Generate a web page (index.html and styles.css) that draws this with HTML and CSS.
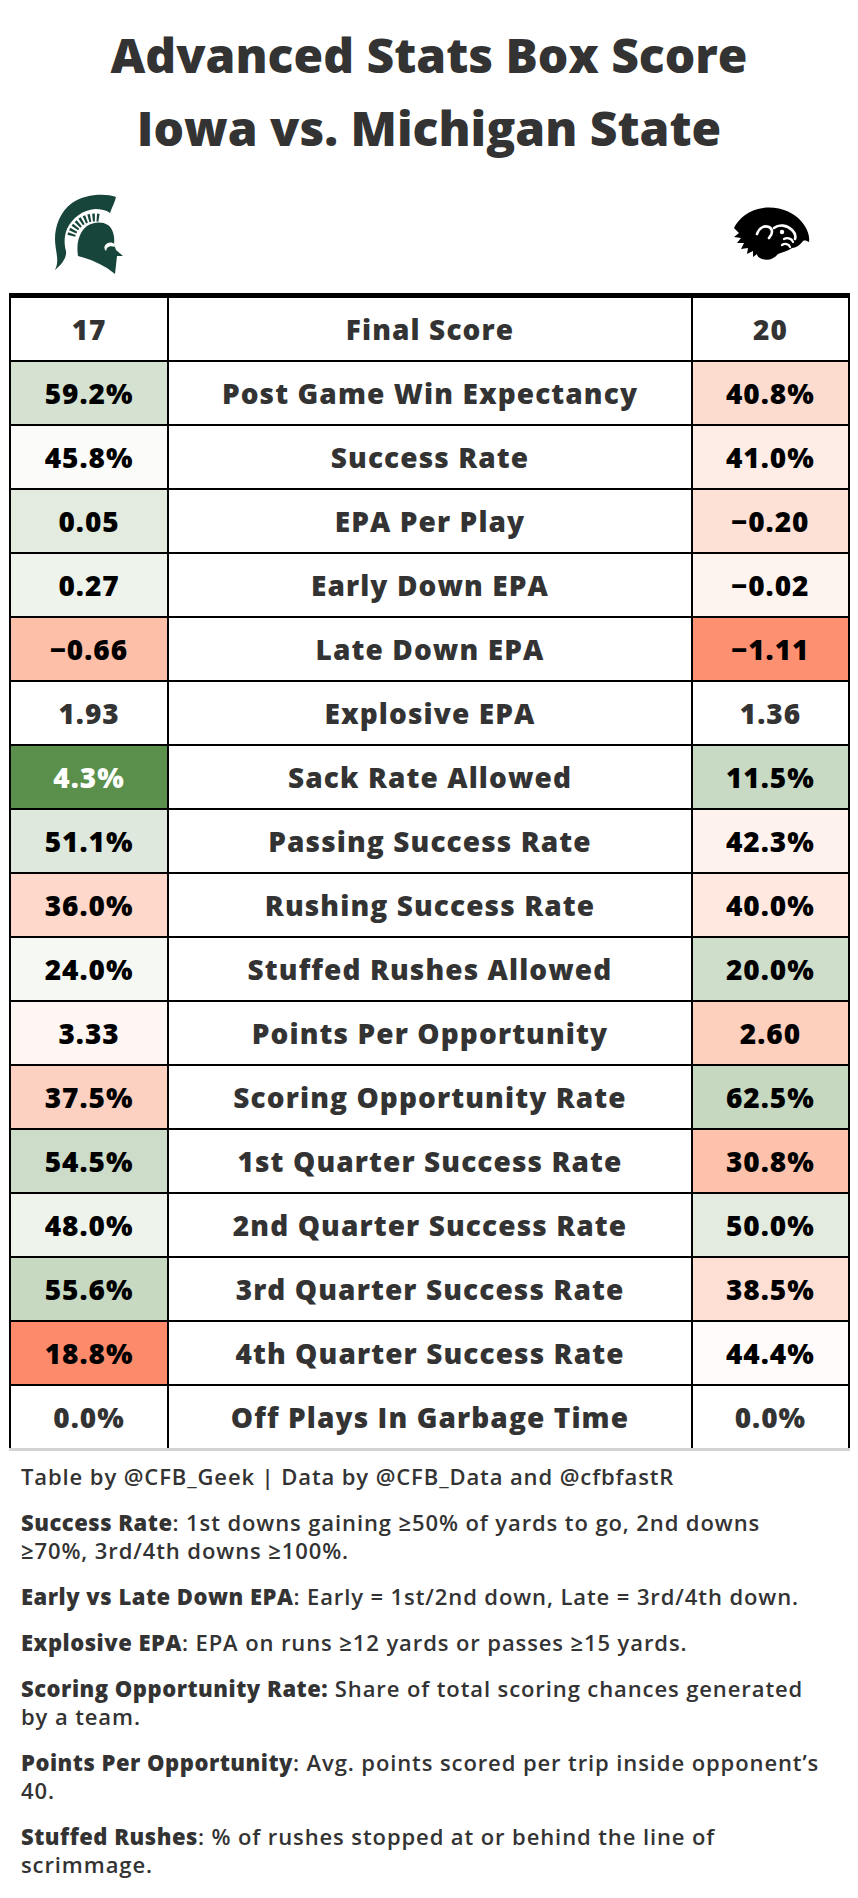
FILE: index.html
```html
<!DOCTYPE html>
<html lang="en">
<head>
<meta charset="utf-8">
<title>Advanced Stats Box Score</title>
<link rel="stylesheet" href="styles.css">
</head>
<body>
<div class="page">
  <header class="title">
    <h1>Advanced Stats Box Score<br>Iowa vs. Michigan State</h1>
  </header>
  <div class="logos">
    <div class="logo-cell">
      <svg class="logo-msu" width="68" height="80" viewBox="0 0 68 80" aria-label="Michigan State">
        <path fill="#18453b" d="M61,3 C50,-1 30,0 17,9 C5,18 0,32 0,45 C0,57 5,66 0,76 C6,71 12,64 11,57 C9,50 9,42 12,35 C17,24 28,16 40,15 C46,15 51,16 55,19 C57,13 60,8 61,3 Z"/>
        <path fill="none" stroke="#18453b" stroke-width="8" stroke-dasharray="2.3 1.9" d="M16.3,41.7 A24.5,24.5 0 0 1 44.3,23.9"/>
        <path fill="#18453b" d="M23,62 C21,50 24,38 32,32 C38,28 47,27 53,31 C58,35 60,42 59,50 L61,56 L68,62 L62,62 L60,80 L52,74 C42,68 32,64 23,62 Z"/>
        <path fill="#ffffff" d="M50,51.5 C52,48 57,47.5 59.5,50 L60,53 C57,52 54,52 52,54 L51,57 C49,55 49,53 50,51.5 Z"/>
      </svg>
    </div>
    <div class="logo-gap"></div>
    <div class="logo-cell">
      <svg class="logo-iowa" width="86" height="58" viewBox="0 0 86 58" aria-label="Iowa">
        <path fill="#000" d="M8,24 C13,14 23,6 37,4 C53,2 67,8 75,17 C81,24 84,31 83,38 C81,37 79,36 77,37 C74,41 70,44 66,44 C62,47 56,48 52,50 C48,55 42,57 36,55 C33,54 31,52 31,50 L27,53 L27,47 L21,50 L22,44 L15,45 L18,39 L11,39 L15,34 L8,33 L13,29 Z"/>
        <path fill="none" stroke="#fff" stroke-width="2.6" stroke-linecap="round" d="M31,30 C33,24 38,21 43,23 C47,25 47,30 43,34"/>
        <path fill="none" stroke="#fff" stroke-width="2.6" stroke-linecap="round" d="M48,24 C53,20 61,21 66,26 C69,29 70,32 69,35"/>
        <circle cx="56" cy="28" r="2.2" fill="#fff"/>
        <path fill="none" stroke="#fff" stroke-width="2.3" stroke-linecap="round" d="M58,35 C62,33 66,35 67,38"/>
        <path fill="none" stroke="#fff" stroke-width="2.3" stroke-linecap="round" d="M56,41 C59,39 63,40 64,43"/>
      </svg>
    </div>
  </div>

  <table class="box">
    <tbody>
      <tr><td class="val plain">17</td><td class="label">Final Score</td><td class="val plain">20</td></tr>
      <tr><td class="val" style="background:#d5e2d1">59.2%</td><td class="label">Post Game Win Expectancy</td><td class="val" style="background:#fddcd0">40.8%</td></tr>
      <tr><td class="val" style="background:#fbfbf9">45.8%</td><td class="label">Success Rate</td><td class="val" style="background:#feede6">41.0%</td></tr>
      <tr><td class="val" style="background:#e2ebde">0.05</td><td class="label">EPA Per Play</td><td class="val" style="background:#fde1d6">&minus;0.20</td></tr>
      <tr><td class="val" style="background:#eef3ec">0.27</td><td class="label">Early Down EPA</td><td class="val" style="background:#fef4ef">&minus;0.02</td></tr>
      <tr><td class="val" style="background:#fdbfa8">&minus;0.66</td><td class="label">Late Down EPA</td><td class="val" style="background:#fd9070">&minus;1.11</td></tr>
      <tr><td class="val plain">1.93</td><td class="label">Explosive EPA</td><td class="val plain">1.36</td></tr>
      <tr><td class="val light" style="background:#5a8f4c">4.3%</td><td class="label">Sack Rate Allowed</td><td class="val" style="background:#c8dac3">11.5%</td></tr>
      <tr><td class="val" style="background:#dfe8dc">51.1%</td><td class="label">Passing Success Rate</td><td class="val" style="background:#fef2ee">42.3%</td></tr>
      <tr><td class="val" style="background:#fed8ca">36.0%</td><td class="label">Rushing Success Rate</td><td class="val" style="background:#fee8df">40.0%</td></tr>
      <tr><td class="val" style="background:#f5f8f3">24.0%</td><td class="label">Stuffed Rushes Allowed</td><td class="val" style="background:#cfdecb">20.0%</td></tr>
      <tr><td class="val" style="background:#fef6f3">3.33</td><td class="label">Points Per Opportunity</td><td class="val" style="background:#fdcfbd">2.60</td></tr>
      <tr><td class="val" style="background:#fdd1c2">37.5%</td><td class="label">Scoring Opportunity Rate</td><td class="val" style="background:#c6d8c0">62.5%</td></tr>
      <tr><td class="val" style="background:#cddcc8">54.5%</td><td class="label">1st Quarter Success Rate</td><td class="val" style="background:#fdc2ab">30.8%</td></tr>
      <tr><td class="val" style="background:#eef4ec">48.0%</td><td class="label">2nd Quarter Success Rate</td><td class="val" style="background:#e3ebdf">50.0%</td></tr>
      <tr><td class="val" style="background:#c8d9c2">55.6%</td><td class="label">3rd Quarter Success Rate</td><td class="val" style="background:#fedfd4">38.5%</td></tr>
      <tr><td class="val" style="background:#fd8b6b">18.8%</td><td class="label">4th Quarter Success Rate</td><td class="val" style="background:#fefbfa">44.4%</td></tr>
      <tr><td class="val plain">0.0%</td><td class="label">Off Plays In Garbage Time</td><td class="val plain">0.0%</td></tr>
    </tbody>
  </table>

  <footer class="notes">
    <p>Table by @CFB_Geek | Data by @CFB_Data and @cfbfastR</p>
    <p><b>Success Rate</b>: 1st downs gaining ≥50% of yards to go, 2nd downs ≥70%, 3rd/4th downs ≥100%.</p>
    <p><b>Early vs Late Down EPA</b>: Early = 1st/2nd down, Late = 3rd/4th down.</p>
    <p><b>Explosive EPA</b>: EPA on runs ≥12 yards or passes ≥15 yards.</p>
    <p><b>Scoring Opportunity Rate:</b> Share of total scoring chances generated by a team.</p>
    <p><b>Points Per Opportunity</b>: Avg. points scored per trip inside opponent’s 40.</p>
    <p><b>Stuffed Rushes</b>: % of rushes stopped at or behind the line of scrimmage.</p>
  </footer>
</div>
</body>
</html>
```
FILE: styles.css
```css
html, body {
  margin: 0;
  padding: 0;
  background: #ffffff;
}

.page {
  width: 858px;
  font-family: "Open Sans", "Liberation Sans", sans-serif;
  color: #333333;
}

.title {
  padding-top: 18px;
  text-align: center;
}

.title h1 {
  margin: 0;
  font-size: 48px;
  line-height: 73px;
  font-weight: 800;
  color: #333333;
  letter-spacing: 0;
}

.logos {
  display: flex;
  align-items: center;
  height: 120px;
  padding-top: 9px;
  margin: 0 10px 0 9px;
}

.logo-cell {
  width: 158px;
  display: flex;
  justify-content: center;
  align-items: center;
}

.logo-gap {
  flex: 1;
}

.logo-msu {
  display: block;
  margin-left: 2px;
  margin-top: 1px;
}

.logo-iowa {
  display: block;
  margin-top: 0;
}

.box {
  margin: 0 0 0 9px;
  border-collapse: separate;
  border-spacing: 0;
  border-top: 5px solid #000;
  border-bottom: 3px solid #d3d3d3;
  table-layout: fixed;
  width: 841px;
}

.box td {
  height: 62px;
  padding: 0;
  text-align: center;
  vertical-align: middle;
  border-right: 2px solid #000;
  border-bottom: 2px solid #000;
  font-weight: 800;
  font-size: 28px;
  line-height: 1;
  white-space: nowrap;
}

.box tr:last-child td {
  border-bottom: none;
}

.box td:first-child {
  border-left: 2px solid #000;
  width: 156px;
}

.box td.label {
  width: 521px;
  color: #333333;
  letter-spacing: 1.1px;
}

.box td:last-child {
  width: 155px;
}

.val {
  color: #000000;
  letter-spacing: 1px;
}

.val.plain {
  color: #333333;
}

.val.light {
  color: #ffffff;
}

.notes {
  padding: 11px 34px 0 21px;
  font-size: 22px;
  line-height: 28px;
  font-weight: 600;
  letter-spacing: 0.9px;
  color: #333333;
}

.notes p {
  margin: 0 0 18px 0;
}

.notes b {
  font-weight: 800;
  letter-spacing: 0.5px;
}
```
